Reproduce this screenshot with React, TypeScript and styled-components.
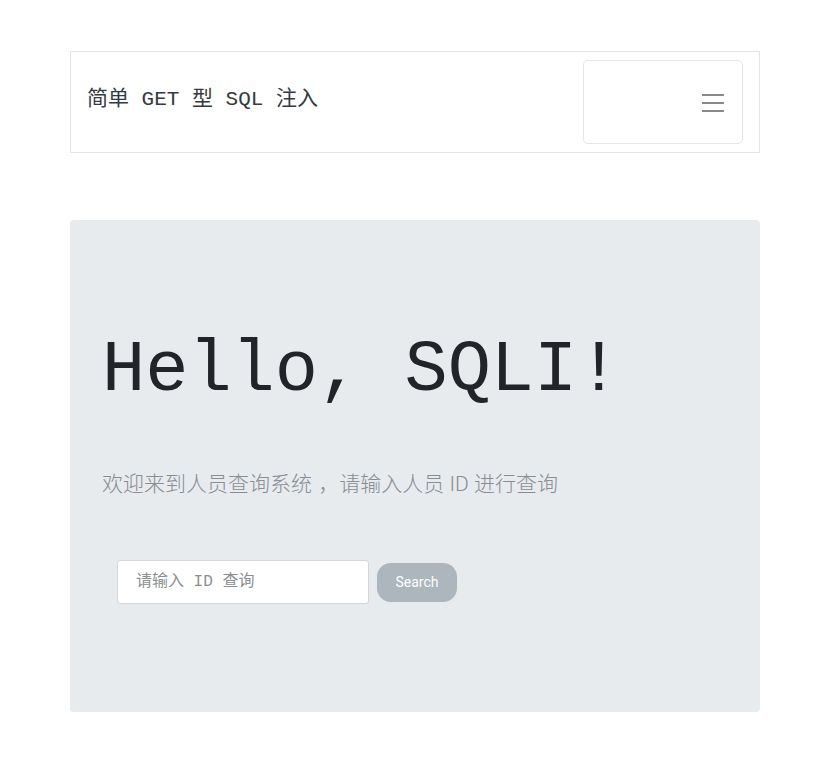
import React from "react";
import styled, { createGlobalStyle } from "styled-components";

const Global = createGlobalStyle`
  html, body { margin: 0; padding: 0; background: #fff; }
  body { font-family: Roboto, "Noto Sans CJK SC", sans-serif; color: #212529; }
  * { box-sizing: border-box; }
`;

const Page = styled.div`
  width: 690px;
  margin: 0 0 0 70px;
  padding-top: 51px;
  display: flex;
  flex-direction: column;
  gap: 67px;
`;

const Navbar = styled.nav`
  border: 1px solid #e4e4e4;
  background: #fff;
  height: 102px;
  padding: 8px 16px;
  display: flex;
  align-items: center;
  justify-content: space-between;
`;

const Brand = styled.a`
  font-family: "Liberation Mono", "Noto Sans CJK SC", monospace;
  font-size: 21px;
  line-height: 28px;
  margin-bottom: 4px;
  color: #343a40;
  text-decoration: none;
  white-space: pre;
`;

const Toggler = styled.button`
  width: 160px;
  height: 84px;
  background: #fff;
  border: 1px solid #e6e6e6;
  border-radius: 5px;
  display: flex;
  align-items: center;
  justify-content: flex-end;
  padding: 0 14px 0 0;
`;

const Jumbotron = styled.section`
  background: #e8ebee;
  border-radius: 4px;
  height: 492px;
  padding: 115px 32px 0;
  display: flex;
  flex-direction: column;
`;

const Title = styled.h1`
  margin: 0;
  font-family: "Liberation Mono", monospace;
  font-weight: 400;
  font-size: 72px;
  line-height: 1;
  color: #212529;
`;

const Lead = styled.p`
  margin: 63px 0 0;
  font-family: Roboto, "Noto Sans CJK SC", sans-serif;
  font-weight: 300;
  font-size: 21px;
  line-height: 28px;
  color: #878d93;
`;

const Punct = styled.span`
  padding-left: 0.3em;
`;

const Form = styled.form`
  margin-top: 62px;
  padding-left: 15px;
  display: flex;
  align-items: center;
  gap: 8px;
`;

const Input = styled.input`
  width: 252px;
  height: 44px;
  border: 1px solid #d4d6d8;
  border-radius: 3px;
  padding: 0 18px;
  font-family: "Liberation Mono", "Noto Sans CJK SC", monospace;
  font-size: 16px;
  background: #fff;
  outline: none;
  &::placeholder { color: #8b8f93; }
`;

const Button = styled.button`
  width: 80px;
  height: 39px;
  border: none;
  border-radius: 14px;
  background: #adb5bd;
  color: #fff;
  font-family: Roboto, sans-serif;
  font-size: 14px;
  padding: 0;
`;

const Hamburger = () => (
  <svg width="30" height="30" viewBox="0 0 30 30">
    <path d="M4 8h22M4 16h22M4 24h22" stroke="#8a8a8a" strokeWidth="2.2" strokeLinecap="butt" />
  </svg>
);

export default function App() {
  return (
    <>
      <Global />
      <Page>
        <Navbar>
          <Brand href="#">简单 GET 型 SQL 注入</Brand>
          <Toggler type="button" aria-label="Toggle navigation">
            <Hamburger />
          </Toggler>
        </Navbar>
        <Jumbotron>
          <Title>Hello, SQLI!</Title>
          <Lead>
            欢迎来到人员查询系统<Punct>，</Punct>请输入人员 ID 进行查询
          </Lead>
          <Form onSubmit={(e) => e.preventDefault()}>
            <Input placeholder="请输入 ID 查询" />
            <Button type="submit">Search</Button>
          </Form>
        </Jumbotron>
      </Page>
    </>
  );
}
